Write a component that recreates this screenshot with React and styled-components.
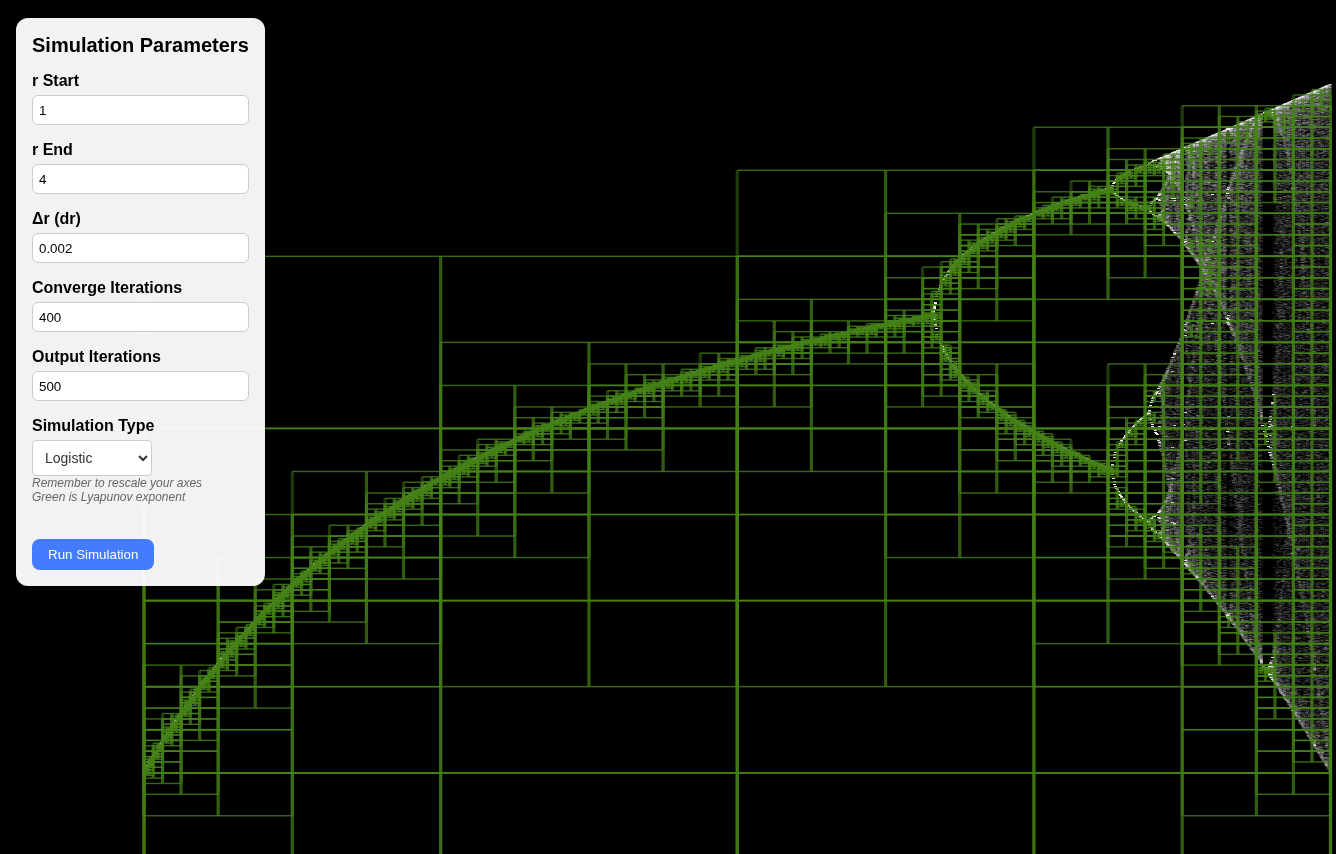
import React, { useLayoutEffect, useRef, useState } from "react";
import styled, { createGlobalStyle } from "styled-components";

const GlobalStyle = createGlobalStyle`
  html, body, #root { height: 100%; }
  body {
    margin: 0;
    background: #000;
    font-family: "Liberation Sans", Arial, sans-serif;
    overflow: hidden;
  }
`;

const Page = styled.main`
  position: relative;
  min-height: 100%;
  padding: 18px 16px;
  box-sizing: border-box;
`;

const Plot = styled.canvas`
  position: absolute;
  inset: 0;
  width: 100%;
  height: 100%;
`;

const Panel = styled.form`
  position: relative;
  box-sizing: border-box;
  width: fit-content;
  padding: 16px;
  border-radius: 12px;
  background: rgba(255, 255, 255, 0.95);
  color: #000;
`;

const Title = styled.h2`
  margin: 0 0 16px;
  font-size: 20px;
  line-height: 22px;
  font-weight: 700;
`;

const Field = styled.div`
  display: flex;
  flex-direction: column;
  align-items: flex-start;
  margin-bottom: ${(p) => (p.$last ? 35 : 16)}px;
`;

const Label = styled.label`
  margin-bottom: 5px;
  font-size: 16px;
  line-height: 18px;
  font-weight: 700;
`;

const NumberInput = styled.input`
  box-sizing: border-box;
  width: 100%;
  height: 30px;
  padding: 6px;
  border: 1px solid #ccc;
  border-radius: 6px;
  background: #fff;
  color: #000;
  font-family: inherit;
`;

const Select = styled.select`
  box-sizing: border-box;
  width: 120px;
  height: 36px;
  padding: 8px;
  border: 1px solid #ccc;
  border-radius: 4px;
  background: #fff;
  color: #333;
  font-family: inherit;
  font-size: 14px;
`;

const Note = styled.p`
  margin: 0;
  color: #666;
  font-size: 12px;
  line-height: 14px;
  font-style: italic;
`;

const RunButton = styled.button`
  display: block;
  height: 31px;
  padding: 0 16px;
  border: 0;
  border-radius: 8px;
  background: #447bff;
  color: #fff;
  font-family: inherit;
`;

const FIELDS = [
  { id: "rStart", label: "r Start", value: "1" },
  { id: "rEnd", label: "r End", value: "4" },
  { id: "dr", label: "Δr (dr)", value: "0.002" },
  { id: "converge", label: "Converge Iterations", value: "400" },
  { id: "output", label: "Output Iterations", value: "500" },
];

const CAPACITY = 500;
const MAX_DEPTH = 12;
const VIEW = { left: 144, bottom: 772.7, xScale: 395.5, yScale: 688.5 };

function simulate({ rStart, rEnd, dr, converge, output }) {
  const columns = Math.round((rEnd - rStart) / dr) + 1;
  const rs = new Float64Array(columns * output);
  const xs = new Float64Array(columns * output);
  let n = 0;
  for (let c = 0; c < columns; c++) {
    const r = rStart + c * dr;
    let x = 0.5123;
    for (let i = 0; i < converge; i++) x = r * x * (1 - x);
    for (let i = 0; i < output; i++) {
      x = r * x * (1 - x);
      rs[n] = r;
      xs[n++] = x;
    }
  }
  return { rs, xs };
}

// Walks the quadtree of the points; every cell is reported once.
function visitCells(points, ids, cell, depth, visit) {
  visit(cell);
  if (ids.length <= CAPACITY || depth >= MAX_DEPTH) return;
  const w = cell.w / 2;
  const h = cell.h / 2;
  const mx = cell.x + w;
  const my = cell.y + h;
  const parts = [[], [], [], []];
  for (let i = 0; i < ids.length; i++) {
    const id = ids[i];
    parts[(points.rs[id] >= mx ? 1 : 0) + (points.xs[id] >= my ? 2 : 0)].push(id);
  }
  parts.forEach((part, q) =>
    visitCells(
      points,
      part,
      { x: q & 1 ? mx : cell.x, y: q & 2 ? my : cell.y, w, h },
      depth + 1,
      visit
    )
  );
}

function draw(canvas, params) {
  const width = canvas.clientWidth;
  const height = canvas.clientHeight;
  canvas.width = width;
  canvas.height = height;
  const ctx = canvas.getContext("2d");
  const toX = (r) => VIEW.left + (r - 1) * VIEW.xScale;
  const toY = (v) => VIEW.bottom - v * VIEW.yScale;
  const points = simulate(params);

  ctx.fillStyle = "rgba(255, 255, 255, 0.06)";
  for (let i = 0; i < points.rs.length; i++) {
    ctx.fillRect(Math.round(toX(points.rs[i])) - 2, Math.floor(toY(points.xs[i])), 3, 1);
  }

  // Strokes are sized relative to the view, so they are wider than tall.
  const lineX = width / 420;
  const lineY = height / 600;
  const ids = Array.from(points.rs, (_, i) => i);
  const root = { x: params.rStart, y: 0, w: params.rEnd - params.rStart, h: 1 };
  visitCells(points, ids, root, 0, ({ x, y, w, h }) => {
    const left = toX(x);
    const top = toY(y);
    const cw = w * VIEW.xScale;
    const ch = h * VIEW.yScale;
    ctx.fillStyle = "rgba(70, 130, 25, 0.45)";
    ctx.fillRect(left - lineX / 2, top, lineX, ch);
    ctx.fillRect(left + cw - lineX / 2, top, lineX, ch);
    ctx.fillStyle = "rgba(70, 130, 25, 0.8)";
    ctx.fillRect(left, top - lineY / 2, cw, lineY);
    ctx.fillRect(left, top + ch - lineY / 2, cw, lineY);
  });
}

export default function App() {
  const canvasRef = useRef(null);
  const [values, setValues] = useState(() =>
    Object.fromEntries(FIELDS.map((f) => [f.id, f.value]))
  );

  const run = () => {
    const params = Object.fromEntries(
      Object.entries(values).map(([key, value]) => [key, Number(value)])
    );
    draw(canvasRef.current, params);
  };

  useLayoutEffect(run, []);

  return (
    <Page>
      <GlobalStyle />
      <Plot ref={canvasRef} />
      <Panel
        onSubmit={(event) => {
          event.preventDefault();
          run();
        }}
      >
        <Title>Simulation Parameters</Title>
        {FIELDS.map((field) => (
          <Field key={field.id}>
            <Label htmlFor={field.id}>{field.label}</Label>
            <NumberInput
              id={field.id}
              type="number"
              step="any"
              value={values[field.id]}
              onChange={(e) => setValues({ ...values, [field.id]: e.target.value })}
            />
          </Field>
        ))}
        <Field $last>
          <Label htmlFor="simulationType">Simulation Type</Label>
          <Select id="simulationType" defaultValue="logistic">
            <option value="logistic">Logistic</option>
          </Select>
          <Note>Remember to rescale your axes</Note>
          <Note>Green is Lyapunov exponent</Note>
        </Field>
        <RunButton type="submit">Run Simulation</RunButton>
      </Panel>
    </Page>
  );
}
